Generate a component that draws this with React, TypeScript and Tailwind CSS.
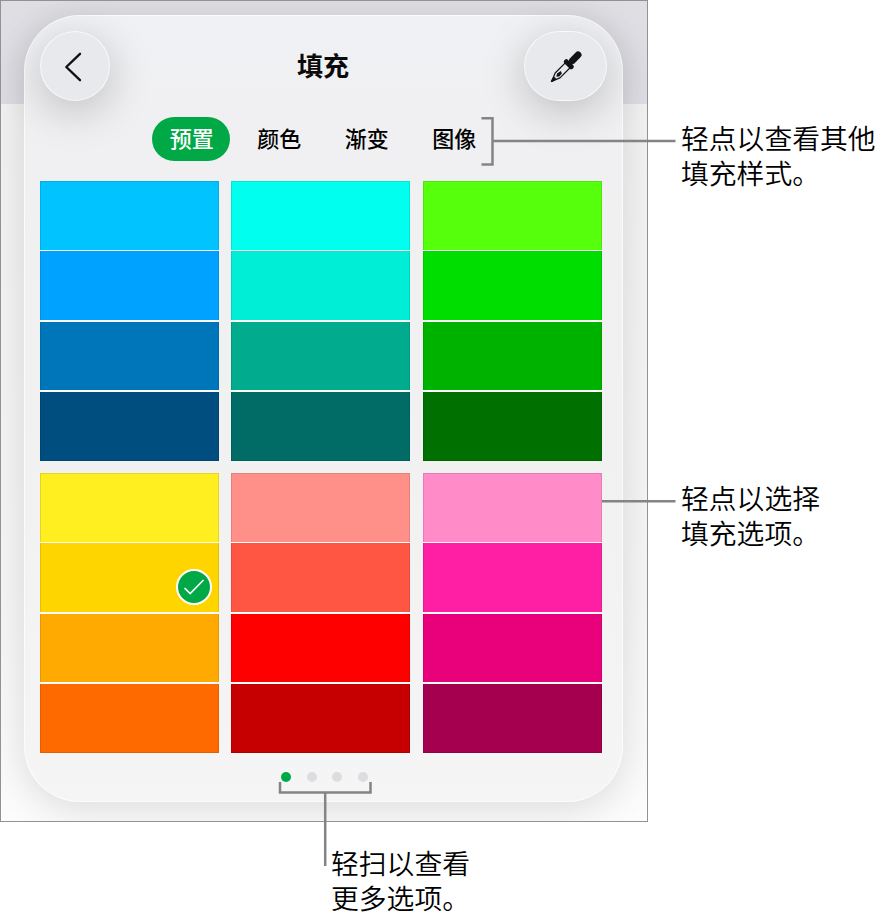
import clsx from "clsx"

interface Swatch {
  color: string
  selected?: boolean
}

const tabs = ["预置", "颜色", "渐变", "图像"]

const groups: Swatch[][] = [
  [{ color: "bg-[#00c3ff]" }, { color: "bg-[#00a2ff]" }, { color: "bg-[#0076ba]" }, { color: "bg-[#004d80]" }],
  [{ color: "bg-[#00ffee]" }, { color: "bg-[#00eed6]" }, { color: "bg-[#00ab8e]" }, { color: "bg-[#006c65]" }],
  [{ color: "bg-[#56ff0c]" }, { color: "bg-[#00de00]" }, { color: "bg-[#00b200]" }, { color: "bg-[#007100]" }],
  [
    { color: "bg-[#ffee20]" },
    { color: "bg-[#ffd500]", selected: true },
    { color: "bg-[#ffaa00]" },
    { color: "bg-[#ff6a00]" },
  ],
  [{ color: "bg-[#ff9089]" }, { color: "bg-[#ff5644]" }, { color: "bg-[#ff0000]" }, { color: "bg-[#c60000]" }],
  [{ color: "bg-[#ff8bc8]" }, { color: "bg-[#ff1fa5]" }, { color: "bg-[#e9007b]" }, { color: "bg-[#a5004f]" }],
]

function Eyedropper() {
  return (
    <svg width="36" height="36" viewBox="0 0 36 36" fill="none" aria-hidden="true">
      <g transform="translate(2.2 33.8) rotate(-45)">
        <path
          d="M1 0 L9 -3.4 H24 M1 0 L9 3.4 H24"
          stroke="#111214"
          strokeWidth="1.2"
          strokeLinejoin="round"
          strokeLinecap="round"
        />
        <path d="M0 -0.8 L5 -2 L6 0 L5 2 L0 0.8 Z" fill="#111214" />
        <path d="M7.2 0 L10 -1.7 L14.5 -0.9 L13.5 1.6 L9.5 1.9 Z" fill="#111214" />
        <rect x="22.4" y="-6" width="5" height="12" rx="2.4" fill="#111214" />
        <path d="M27 -2.2 L29 -3.4 H38 A3.4 3.4 0 0 1 38 3.4 H29 L27 2.2 Z" fill="#111214" />
      </g>
    </svg>
  )
}

function SwatchGroup({ swatches }: { swatches: Swatch[] }) {
  return (
    <div className="flex h-[279.5px] flex-col gap-[1.5px] bg-white/75">
      {swatches.map((swatch) => (
        <button
          key={swatch.color}
          className={clsx(
            "flex h-[68.75px] shrink-0 items-center justify-end border-x border-black/10 pr-[6px] pt-[19px] first:border-t last:border-b",
            swatch.color
          )}
        >
          {swatch.selected ? (
            <span className="flex size-9 items-center justify-center rounded-full border-2 border-white bg-[#00a946]">
              <svg width="24" height="24" viewBox="0 0 24 24" fill="none" aria-hidden="true">
                <path d="M2.5 13 L8.2 18.6 L21.5 5" stroke="white" strokeWidth="1.7" />
              </svg>
            </span>
          ) : null}
        </button>
      ))}
    </div>
  )
}

function Callout({ lines, className }: { lines: string[]; className: string }) {
  return (
    <div className={clsx("absolute text-[27.8px] leading-[35px] font-[350] whitespace-nowrap text-black", className)}>
      {lines.map((line) => (
        <p key={line}>{line}</p>
      ))}
    </div>
  )
}

export default function App() {
  return (
    <div className="relative h-[918px] w-[886px] overflow-hidden bg-white font-['Noto_Sans_CJK_SC',sans-serif]">
      <div className="h-[822px] w-[648px] overflow-hidden border border-[#929292] bg-[linear-gradient(to_bottom,#dfdee3_0,#dfdee5_103px,#f2f2f2_103px,#f6f6f6_600px,#fcfcfc_100%)] pt-[14px] pl-[23px]">
        <div className="h-[787px] w-[599px] rounded-[56px] border-[1.5px] border-white/70 bg-[linear-gradient(to_bottom,#f0f1f4_0,#f0f0f2_130px,#f1f1f1_55%,#f5f5f5_100%)] px-[15px] pt-[15px] shadow-[0_8px_38px_rgba(0,0,0,0.13)]">
          <header className="flex h-[70px] items-center justify-between">
            <button className="flex size-[70px] items-center justify-center rounded-full border-[1.5px] border-white/70 bg-[#e8e9ec] pt-[1px] pr-1 shadow-[0_10px_44px_rgba(0,0,0,0.22)]">
              <svg width="18" height="30" viewBox="0 0 18 30" fill="none" aria-hidden="true">
                <path
                  d="M16 1.8 L2.3 15 L16 28.2"
                  stroke="#111214"
                  strokeWidth="2.4"
                  strokeLinecap="round"
                  strokeLinejoin="round"
                />
              </svg>
            </button>
            <h1 className="pb-1 pl-3 text-[26px] font-bold text-[#0b0b0c]">填充</h1>
            <button className="flex h-[70px] w-[83px] items-center justify-center rounded-full border-[1.5px] border-white/70 bg-[#e8e9ec] pl-[3px] shadow-[0_10px_44px_rgba(0,0,0,0.22)]">
              <Eyedropper />
            </button>
          </header>

          <nav className="mt-4 flex h-11 gap-[9px] pl-[111.5px]">
            {tabs.map((tab, index) => (
              <button
                key={tab}
                className={clsx(
                  "flex w-[78.5px] items-center justify-center rounded-full pb-[3px] pl-[2px] text-[22px] font-medium",
                  index === 0 ? "bg-[#00a946] text-white" : "text-black"
                )}
              >
                {tab}
              </button>
            ))}
          </nav>

          <div className="mt-5 grid w-[561.8px] grid-cols-3 gap-x-[12.4px] gap-y-[12.5px]">
            {groups.map((swatches) => (
              <SwatchGroup key={swatches[0].color} swatches={swatches} />
            ))}
          </div>

          <div className="mt-[19px] flex gap-[15.5px] pl-[241px]">
            <span className="size-[10px] rounded-full bg-[#00a946]" />
            <span className="size-[10px] rounded-full bg-[#dcdde0]" />
            <span className="size-[10px] rounded-full bg-[#dcdde0]" />
            <span className="size-[10px] rounded-full bg-[#dcdde0]" />
          </div>
        </div>
      </div>

      {/* leader lines over the popover */}
      <svg
        className="pointer-events-none absolute inset-0"
        width="886"
        height="918"
        viewBox="0 0 886 918"
        fill="none"
        stroke="#848484"
        strokeWidth="2.5"
        aria-hidden="true"
      >
        <path d="M481.5 118.3 H492.5 V164.5 H481.5 M492.5 141 H675.5" />
        <path d="M602 501.3 H675.5" />
        <path d="M280 782 V792.5 H370.5 V782 M325.2 792.5 V866" />
      </svg>

      <Callout className="top-[120px] left-[681px]" lines={["轻点以查看其他", "填充样式。"]} />
      <Callout className="top-[480px] left-[681px]" lines={["轻点以选择", "填充选项。"]} />
      <Callout className="top-[845px] left-[331px]" lines={["轻扫以查看", "更多选项。"]} />
    </div>
  )
}
